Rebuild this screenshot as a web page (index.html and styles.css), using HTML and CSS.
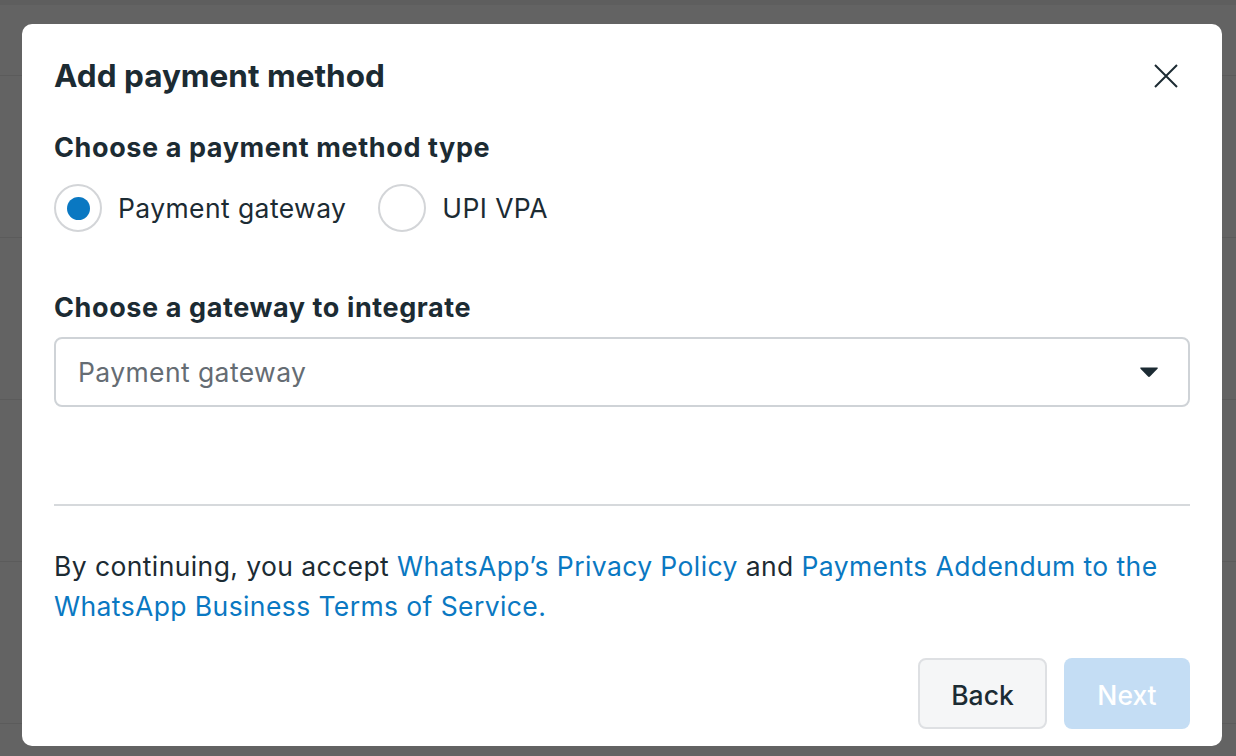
FILE: index.html
```html
<!DOCTYPE html>
<html lang="en">
<head>
<meta charset="utf-8">
<title>Add payment method</title>
<link rel="stylesheet" href="styles.css">
</head>
<body>
<div class="backdrop">
  <div class="bg-row bg-row-top"></div>
  <div class="bg-row"></div>
  <div class="bg-row"></div>
  <div class="bg-row"></div>
  <div class="bg-row"></div>
</div>
<div class="dialog" role="dialog" aria-labelledby="dlg-title">
  <div class="dialog-header">
    <h1 id="dlg-title" class="dialog-title">Add payment method</h1>
    <button class="close-btn" aria-label="Close">
      <svg width="24" height="24" viewBox="0 0 24 24"><path d="M1 1 L23 23 M23 1 L1 23" stroke="#1c2b33" stroke-width="2" fill="none"/></svg>
    </button>
  </div>
  <h2 class="section-title">Choose a payment method type</h2>
  <div class="radio-row">
    <label class="radio">
      <span class="radio-circle checked"><span class="radio-dot"></span></span>
      <span class="radio-label">Payment gateway</span>
    </label>
    <label class="radio">
      <span class="radio-circle"></span>
      <span class="radio-label">UPI VPA</span>
    </label>
  </div>
  <h2 class="section-title gateway-title">Choose a gateway to integrate</h2>
  <div class="select">
    <span class="select-placeholder">Payment gateway</span>
    <svg class="caret" width="20" height="12" viewBox="0 0 20 12"><path d="M2 1.5 H18 Q19.5 1.5 18.5 2.7 L11.2 10.3 Q10 11.5 8.8 10.3 L1.5 2.7 Q0.5 1.5 2 1.5 Z" fill="#1c2b33"/></svg>
  </div>
  <div class="divider"></div>
  <p class="terms"><span class="terms-line">By continuing, you accept <a href="#">WhatsApp’s Privacy Policy</a> and <a href="#">Payments Addendum to the</a></span> <span class="terms-line"><a href="#">WhatsApp Business Terms of Service.</a></span></p>
  <div class="actions">
    <button class="btn btn-secondary">Back</button>
    <button class="btn btn-primary" disabled>Next</button>
  </div>
</div>
</body>
</html>
```
FILE: styles.css
```css
* { box-sizing: border-box; }
html, body { margin: 0; padding: 0; }
body {
  width: 1236px;
  height: 756px;
  overflow: hidden;
  background: #636363;
  font-family: "Inter", "Liberation Sans", sans-serif;
  color: #1c2b33;
  position: relative;
}
.backdrop { display: flex; flex-direction: column; }
.bg-row { height: 162px; border-bottom: 1px solid #5b5b5b; }
.bg-row-top { height: 76px; border-top: 5px solid #5e5e5e; }

.dialog {
  position: absolute;
  left: 22px;
  top: 24px;
  width: 1200px;
  height: 722px;
  background: #ffffff;
  border-radius: 10px;
  padding: 32px 32px 0 32px;
  display: flex;
  flex-direction: column;
}
.dialog-header {
  display: flex;
  align-items: center;
  justify-content: space-between;
  height: 40px;
}
.dialog-title {
  margin: 0;
  font-size: 31.5px;
  line-height: 40px;
  font-weight: 700;
}
.close-btn {
  border: none;
  background: none;
  padding: 0;
  margin-right: 12px;
  width: 24px;
  height: 24px;
  display: flex;
  cursor: pointer;
}
.section-title {
  margin: 34px 0 0 0;
  font-size: 27px;
  line-height: 36px;
  font-weight: 700;
  letter-spacing: 0.6px;
}
.radio-row {
  margin-top: 18px;
  display: flex;
  align-items: center;
  gap: 32px;
  height: 48px;
}
.radio { display: flex; align-items: center; gap: 16px; }
.radio-circle {
  width: 48px;
  height: 48px;
  border-radius: 50%;
  border: 2px solid #d3d5d8;
  display: flex;
  align-items: center;
  justify-content: center;
}
.radio-dot {
  width: 23px;
  height: 23px;
  border-radius: 50%;
  background: #0a78c2;
}
.radio-label {
  font-size: 26.5px;
  line-height: 36px;
  letter-spacing: 0.4px;
}
.gateway-title { margin-top: 58px; }
.select {
  margin-top: 11px;
  height: 70px;
  border: 2px solid #cfd3d7;
  border-radius: 8px;
  display: flex;
  align-items: center;
  justify-content: space-between;
  padding: 0 29px 0 22px;
}
.select-placeholder {
  font-size: 26.5px;
  color: #656c73;
  letter-spacing: 0.4px;
}
.caret { display: block; }
.divider {
  margin-top: 97px;
  height: 2px;
  background: #d6d9dc;
}
.terms {
  margin: 40px 0 0 0;
  font-size: 26.5px;
  line-height: 40px;
  letter-spacing: 0.4px;
}
.terms-line { display: block; }
.terms a { color: #0a78c2; text-decoration: none; }
.actions {
  margin-top: 32px;
  display: flex;
  justify-content: flex-end;
  gap: 17px;
}
.btn {
  height: 71px;
  border-radius: 8px;
  font-family: "Inter", "Liberation Sans", sans-serif;
  font-size: 26.5px;
  font-weight: 500;
  padding: 0;
  display: flex;
  align-items: center;
  justify-content: center;
  padding-top: 2px;
}
.btn-secondary {
  background: #f5f6f7;
  border: 2px solid #dee0e3;
  color: #1c2b33;
  width: 129px;
}
.btn-primary {
  background: #c4ddf4;
  border: none;
  color: #ffffff;
  width: 126px;
}
```
